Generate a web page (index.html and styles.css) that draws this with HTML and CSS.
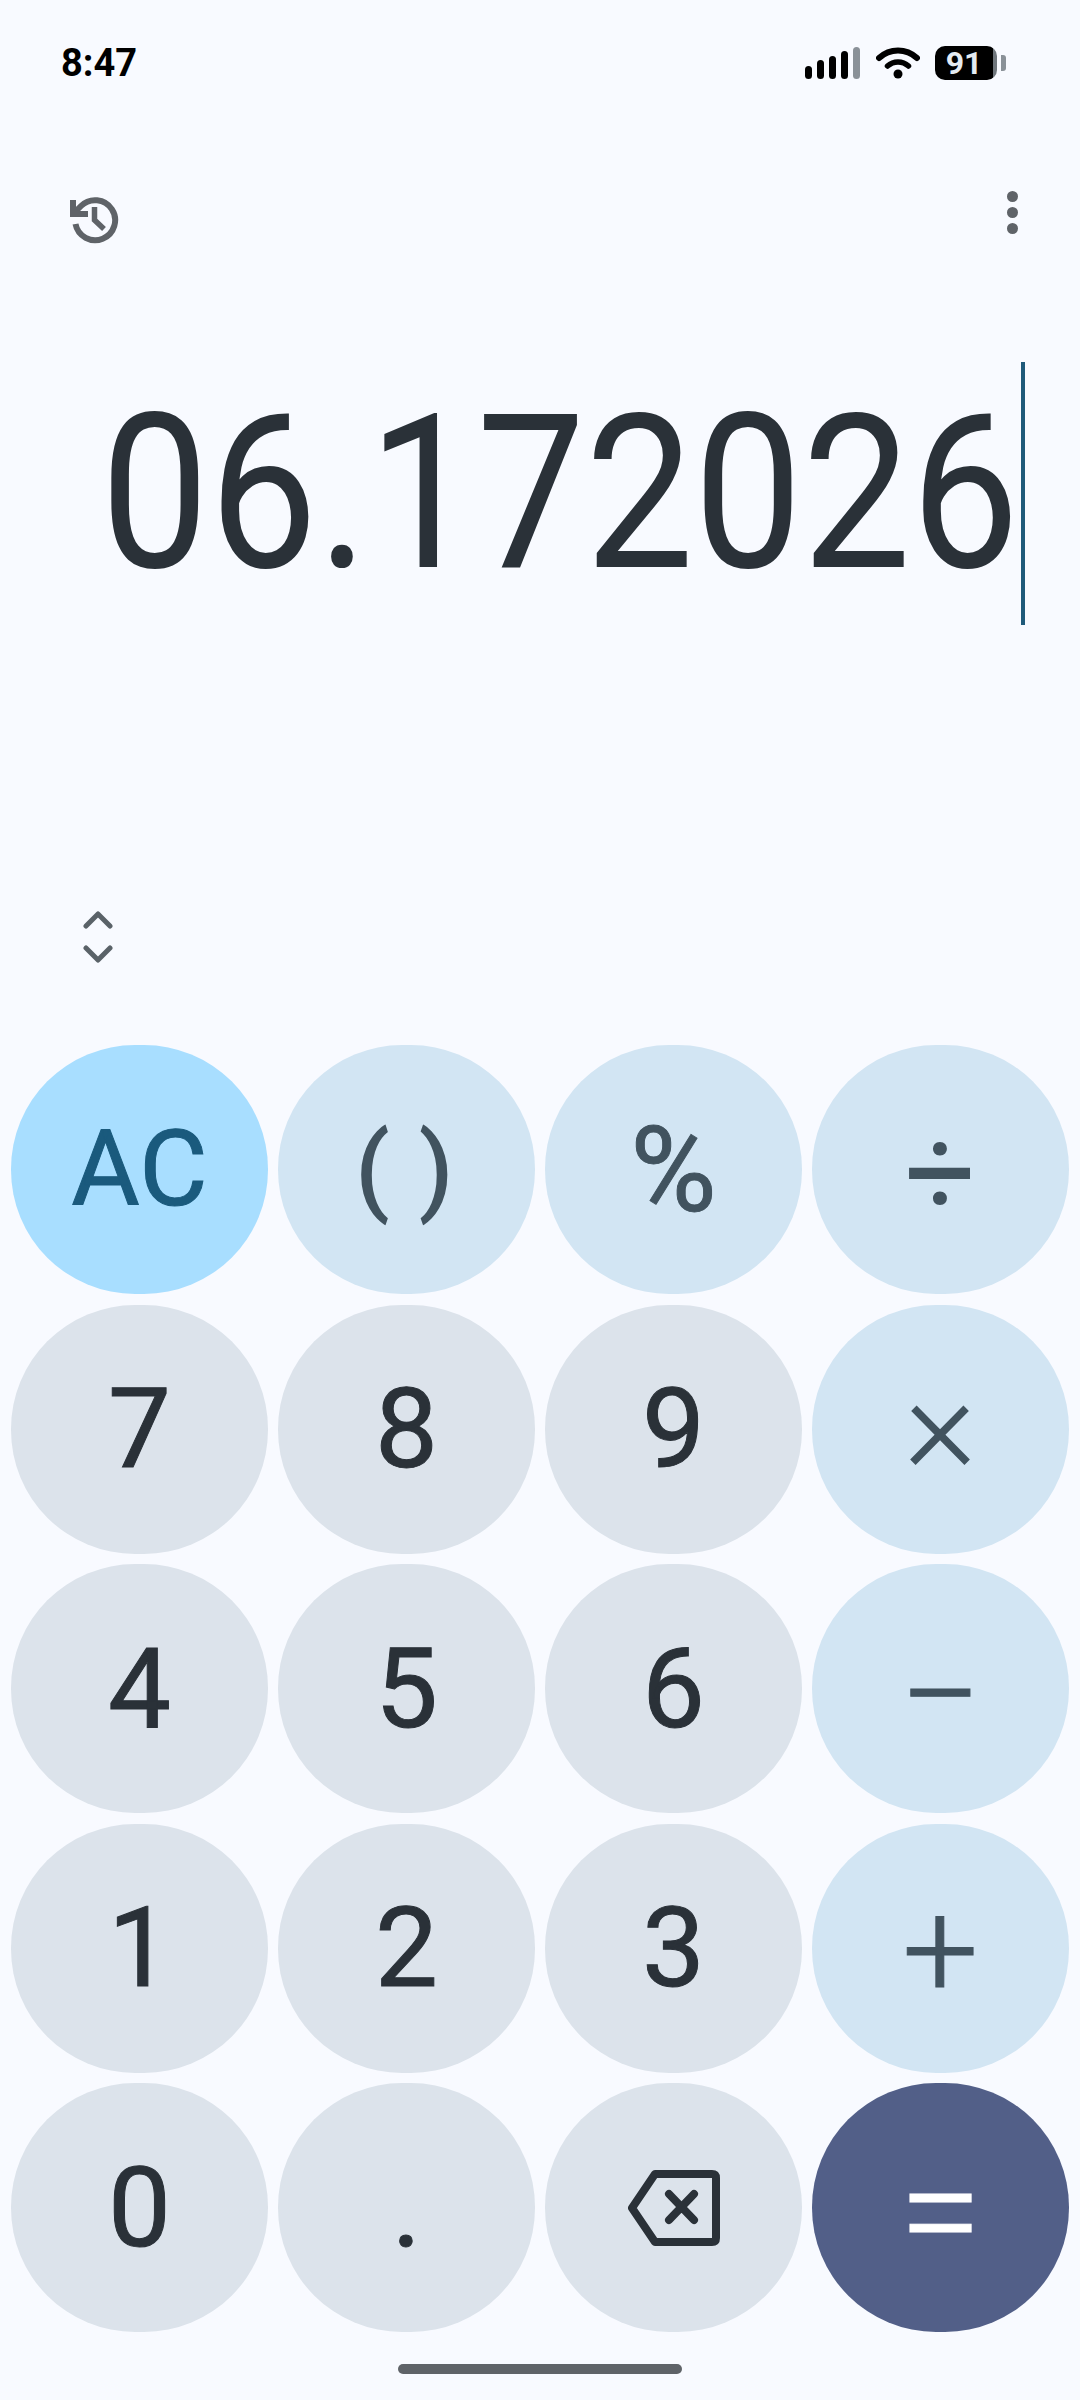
FILE: index.html
```html
<!DOCTYPE html>
<html lang="en">
<head>
  <meta charset="UTF-8" />
  <meta name="viewport" content="width=device-width, initial-scale=1.0"/>
  <title>Calculator</title>
  <link rel="stylesheet" href="styles.css">
</head>
<body>
  <div class="status-bar">
    <span class="time">8:47</span>
    <div class="status-icons">
      <div class="signal">
        <i class="bar bar-1"></i><i class="bar bar-2"></i><i class="bar bar-3"></i><i class="bar bar-4"></i><i class="bar bar-5"></i>
      </div>
      <svg class="wifi" viewBox="0 0 44 34" width="44" height="34">
        <path d="M3 12C14 2 30 2 41 12" fill="none" stroke="#000" stroke-width="6" stroke-linecap="round"/>
        <path d="M11.500 20C17.500 14.500 26.500 14.500 32.500 20" fill="none" stroke="#000" stroke-width="5.500" stroke-linecap="round"/>
        <circle cx="22" cy="28" r="4.500" fill="#000"/>
      </svg>
      <div class="battery"><span>91</span></div>
      <i class="battery-nub"></i>
    </div>
  </div>

  <div class="toolbar">
    <svg class="history" viewBox="0 0 50 50" width="50" height="50">
      <path d="M5.500 29A20 20 0 1 0 11 11L4 18" fill="none" stroke="#5f6368" stroke-width="6"/>
      <path d="M3 5V19H18" fill="none" stroke="#5f6368" stroke-width="6"/>
      <path d="M24.500 12V25L34 34" fill="none" stroke="#5f6368" stroke-width="5.500"/>
    </svg>
    <div class="more"><i></i><i></i><i></i></div>
  </div>

  <div class="display">
    <span class="expression">06.172026</span>
    <i class="cursor"></i>
  </div>

  <div class="expand">
    <svg viewBox="0 0 30 52" width="30" height="52">
      <path d="M3 15L15 3L27 15M3 37L15 49L27 37" fill="none" stroke="#5a6268" stroke-width="5" stroke-linecap="round" stroke-linejoin="round"/>
    </svg>
  </div>

  <div class="keypad">
    <button class="key clear">AC</button>
    <button class="key op parens">( )</button>
    <button class="key op percent">%</button>
    <button class="key op divide">÷</button>

    <button class="key">7</button>
    <button class="key">8</button>
    <button class="key">9</button>
    <button class="key op times">×</button>

    <button class="key">4</button>
    <button class="key">5</button>
    <button class="key">6</button>
    <button class="key op minus">−</button>

    <button class="key">1</button>
    <button class="key">2</button>
    <button class="key">3</button>
    <button class="key op plus">+</button>

    <button class="key">0</button>
    <button class="key">.</button>
    <button class="key backspace">
      <svg viewBox="0 0 92 76" width="92" height="76">
        <path d="M27 4H84Q88 4 88 8V68Q88 72 84 72H27L4 38Z" fill="none" stroke="#2a3138" stroke-width="8" stroke-linejoin="round"/>
        <path d="M41 24L66 50M66 24L41 50" fill="none" stroke="#2a3138" stroke-width="8" stroke-linecap="round"/>
      </svg>
    </button>
    <button class="key equals">=</button>
  </div>

  <div class="home-bar"></div>
</body>
</html>
```

FILE: styles.css
```css
* {
  box-sizing: border-box;
}

body {
  margin: 0;
  width: 1080px;
  height: 2400px;
  overflow: hidden;
  background: #f8faff;
  font-family: Roboto, sans-serif;
  color: #2a3138;
}

i {
  display: block;
}

.status-bar {
  height: 126px;
  display: flex;
  align-items: center;
  justify-content: space-between;
  padding: 0 74px 0 61px;
}

.time {
  font-size: 38px;
  font-weight: 700;
  color: #000;
}

.status-icons {
  display: flex;
  align-items: center;
}

.signal {
  display: flex;
  align-items: flex-end;
  gap: 5px;
  height: 32px;
}

.bar {
  width: 7px;
  border-radius: 4px;
  background: #000;
}

.bar-1 { height: 13px; }
.bar-2 { height: 19px; }
.bar-3 { height: 23px; }
.bar-4 { height: 28px; }
.bar-5 { height: 32px; background: #8a9198; }

.wifi {
  margin: 0 15px 0 16px;
}

.battery {
  width: 62px;
  height: 34px;
  border-radius: 10px;
  background: linear-gradient(90deg, #000 93%, #6f767c 93%);
  display: flex;
  align-items: center;
  justify-content: center;
  padding-right: 4px;
}

.battery span {
  font-size: 32px;
  font-weight: 700;
  line-height: 34px;
  color: #e4ebf2;
}

.battery-nub {
  width: 5px;
  height: 16px;
  margin-left: 4px;
  border-radius: 0 3px 3px 0;
  background: #8a9198;
}

.toolbar {
  height: 180px;
  display: flex;
  align-items: flex-start;
  justify-content: space-between;
  padding: 65px 62px 0 70px;
}

.history {
  margin-top: 4px;
}

.more {
  display: flex;
  flex-direction: column;
  gap: 5px;
}

.more i {
  width: 11px;
  height: 11px;
  border-radius: 50%;
  background: #5f6368;
}

.display {
  display: flex;
  align-items: center;
  justify-content: flex-end;
  height: 263px;
  margin-top: 56px;
  padding-right: 55px;
}

.expression {
  display: inline-block;
  flex: none;
  font-size: 215px;
  line-height: 1;
  margin-right: 2px;
  color: #2a3138;
  transform: scaleX(0.898);
  transform-origin: right center;
}

.cursor {
  flex: none;
  width: 4px;
  height: 263px;
  background: #1f5a7a;
}

.expand {
  height: 52px;
  margin-top: 286px;
  padding-left: 83px;
}

.keypad {
  display: grid;
  grid-template-columns: repeat(4, 257px);
  grid-template-rows: repeat(5, 249px);
  column-gap: 10px;
  row-gap: 10.5px;
  margin-top: 82px;
  padding-left: 11px;
}

.key {
  display: flex;
  align-items: center;
  justify-content: center;
  border: none;
  border-radius: 124px;
  padding: 0;
  background: #dce3eb;
  color: #2a3138;
  font-family: Roboto, sans-serif;
  font-size: 112px;
  line-height: 1;
  -webkit-text-stroke: 1px currentColor;
}

.clear {
  background: #a8deff;
  color: #1a5a7d;
  font-size: 105px;
}

.op {
  background: #d2e5f3;
  color: #41535f;
}

.parens {
  font-size: 95px;
  letter-spacing: 4px;
  -webkit-text-stroke: 2px currentColor;
}

.percent {
  font-size: 118px;
  padding-top: 2px;
}

.divide {
  font-size: 125px;
  padding-top: 6px;
  -webkit-text-stroke: 0;
}

.times {
  font-size: 140px;
  font-weight: 300;
  padding-bottom: 10px;
  -webkit-text-stroke: 0;
}

.minus {
  font-size: 145px;
  font-weight: 300;
  padding-top: 14px;
}

.plus {
  font-size: 135px;
  font-weight: 300;
  padding-top: 6px;
}

.equals {
  background: #525f88;
  color: #fff;
  font-size: 150px;
  font-weight: 300;
  padding-top: 8px;
}

.home-bar {
  width: 284px;
  height: 10px;
  margin: 32px auto 0;
  border-radius: 5px;
  background: #5f6368;
}
```
